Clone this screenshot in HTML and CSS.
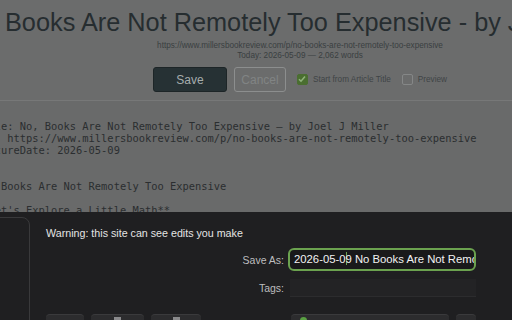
FILE: index.html
```
<!DOCTYPE html>
<html>
  <head>
    <meta charset="UTF-8">
    <meta name="viewport" content="width=device-width,initial-scale=1">
    <link rel="stylesheet" href="styles.css">
    <title>Clip to notes</title>
  </head>
  <body>
    <div class="page">
      <div class="doc-head">
        <h1 class="doc-title"><span>No, Books Are Not Remotely Too Expensive - by Joel J Miller</span></h1>
        <div class="doc-meta">
          <div>https://www.millersbookreview.com/p/no-books-are-not-remotely-too-expensive</div>
          <div>Today: 2026-05-09 — 2,062 words</div>
        </div>
        <div class="actions">
          <button class="btn-save">Save</button>
          <button class="btn-cancel">Cancel</button>
          <label class="check"><span class="box on"><svg viewBox="0 0 10 10" width="10" height="10"><path d="M2 5.2l2 2 4-4.6" fill="none" stroke="#8fb27a" stroke-width="1.6"/></svg></span>Start from Article Title</label>
          <label class="check"><span class="box"></span>Preview</label>
        </div>
      </div>
      <pre class="editor">Title: No, Books Are Not Remotely Too Expensive — by Joel J Miller
URL: https://www.millersbookreview.com/p/no-books-are-not-remotely-too-expensive
captureDate: 2026-05-09


No, Books Are Not Remotely Too Expensive

**Let's Explore a Little Math**</pre>
    </div>

    <div class="sheet">
      <div class="side-panel"></div>
      <div class="sheet-body">
        <p class="warning">Warning: this site can see edits you make</p>
        <div class="form-row">
          <label class="form-label">Save As:</label>
          <div class="field focus">2026-05-0<span class="caret"></span>9 No Books Are Not Remotely Too Expensive</div>
        </div>
        <div class="form-row tags">
          <label class="form-label">Tags:</label>
          <div class="field plain"></div>
        </div>
        <div class="toolbar">
          <span class="tb tb1"></span>
          <span class="tb tb2"><i></i></span>
          <span class="tb tb3"><i></i></span>
          <span class="tb-gap"></span>
          <span class="tb tb4"><b></b></span>
          <span class="tb tb5"></span>
        </div>
      </div>
    </div>
  </body>
</html>
```

FILE: styles.css
```
body {
  margin: 0;
  width: 512px;
  height: 320px;
  overflow: hidden;
  background-color: #696a6a;
  font-family: "Liberation Sans", Arial, sans-serif;
  position: relative
}

.page {
  width: 600px
}

.doc-head {
  background-color: #6b6c6c;
  padding-top: 8px;
  height: 101px;
  box-sizing: border-box;
  border-bottom: 1px solid #777878
}

.doc-title {
  display: flex;
  justify-content: center;
  margin: 0;
  font-size: 25.3px;
  font-weight: normal;
  color: #262d30;
  white-space: nowrap
}

.doc-meta {
  text-align: center;
  font-size: 8.2px;
  line-height: 9.5px;
  color: #3a3f41;
  margin-top: 4px
}

.actions {
  display: flex;
  justify-content: center;
  align-items: center;
  gap: 7px;
  margin-top: 7px
}

.actions button {
  height: 25px;
  border-radius: 3px;
  font-family: "Liberation Sans", Arial, sans-serif;
  font-size: 12px;
  padding: 0
}

.btn-save {
  width: 74px;
  background-color: #263134;
  border: 1px solid #1d2527;
  color: #a5acad
}

.btn-cancel {
  width: 52px;
  background: none;
  border: 1px solid #8c8e8e;
  color: #818484
}

.check {
  display: flex;
  align-items: center;
  gap: 5px;
  font-size: 8.2px;
  color: #3f4446;
  margin-left: 4px
}

.box {
  width: 9px;
  height: 9px;
  border: 1px solid #858787;
  border-radius: 2px;
  display: flex
}

.box.on {
  background-color: #4a6e30;
  border-color: #4a6e30
}

.box svg {
  margin: -1px
}

.editor {
  margin: 0 0 0 -24px;
  padding-top: 19px;
  font-family: "DejaVu Sans Mono", monospace;
  font-size: 10.4px;
  line-height: 12px;
  color: #2b2e30
}

.sheet {
  position: absolute;
  left: 0;
  right: 0;
  top: 212px;
  bottom: 0;
  background-color: #1f1f21;
  overflow: hidden
}

.side-panel {
  position: absolute;
  left: -12px;
  top: 5px;
  width: 40px;
  height: 140px;
  border: 1px solid #39393b;
  border-radius: 8px
}

.sheet-body {
  padding-left: 46px;
  padding-top: 15px
}

.warning {
  margin: 0;
  font-size: 10.7px;
  color: #e4e4e4
}

.form-row {
  display: flex;
  align-items: center;
  margin-top: 9px
}

.form-row.tags {
  margin-top: 8px
}

.form-label {
  width: 242px;
  text-align: right;
  padding-right: 4px;
  box-sizing: border-box;
  font-size: 10.5px;
  color: #bdbdbf
}

.field {
  width: 188px;
  box-sizing: border-box;
  white-space: nowrap;
  overflow: hidden
}

.field.focus {
  height: 23px;
  line-height: 19px;
  font-size: 11.3px;
  border: 2px solid #6ba24f;
  border-radius: 6px;
  background-color: #19191a;
  color: #f2f2f2;
  padding-left: 4px
}

.caret {
  display: inline-block;
  width: 1px;
  height: 13px;
  background-color: #6ba24f;
  vertical-align: -2px;
  margin: 0 -1px 0 0
}

.field.plain {
  height: 18px;
  margin-left: 2px;
  width: 186px;
  background-color: #232325;
  border-bottom: 1px solid #2c2c2e
}

.toolbar {
  display: flex;
  gap: 7px;
  margin-top: 17px
}

.tb {
  height: 14px;
  background-color: #2c2c2e;
  border-top: 1px solid #3a3a3c;
  border-radius: 4px;
  display: flex;
  justify-content: center
}

.tb i {
  width: 7px;
  height: 4px;
  background-color: #8a8a8c;
  margin-top: 2px
}

.tb1 {
  width: 38px
}

.tb2 {
  width: 53px
}

.tb3 {
  width: 50px
}

.tb-gap {
  width: 76px
}

.tb4 {
  width: 158px;
  justify-content: flex-start
}

.tb4 b {
  width: 7px;
  height: 7px;
  border-radius: 50%;
  background-color: #5aa043;
  margin: 2px 0 0 9px
}

.tb5 {
  width: 20px
}
```
